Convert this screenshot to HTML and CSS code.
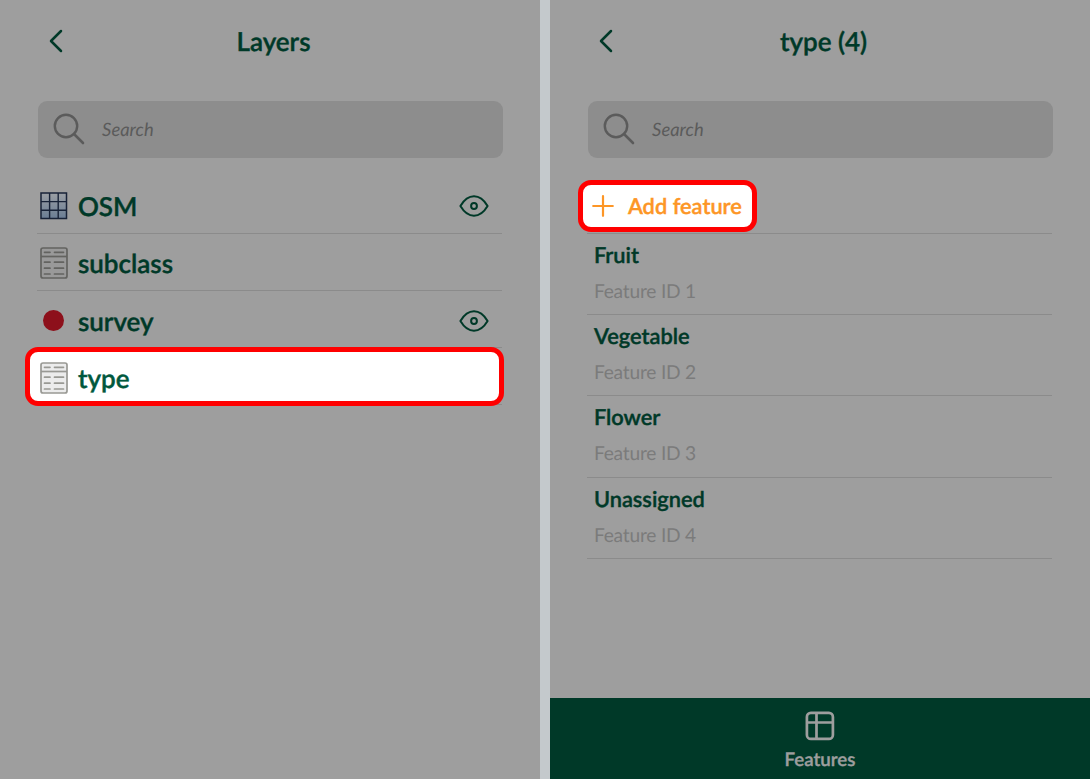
FILE: index.html
```html
<!DOCTYPE html>
<html lang="en">
<head>
<meta charset="utf-8">
<title>Layers</title>
<link rel="stylesheet" href="styles.css">
</head>
<body>
<svg class="defs" width="0" height="0">
  <defs>
    <linearGradient id="gridFill" x1="0" y1="0" x2="0" y2="1"><stop offset="0" stop-color="#9b9fa4"/><stop offset="1" stop-color="#6a7d94"/></linearGradient>
    <symbol id="back" viewBox="0 0 14 24"><path d="M12 2 2 12 12 22" fill="none" stroke="currentColor" stroke-width="2.5" stroke-linecap="round" stroke-linejoin="round"/></symbol>
    <symbol id="search" viewBox="0 0 32 32"><circle cx="13" cy="13" r="11.2" fill="none" stroke="currentColor" stroke-width="2.4"/><path d="M21 21 30 30" stroke="currentColor" stroke-width="2.6" stroke-linecap="round"/></symbol>
    <symbol id="eye" viewBox="0 0 30 22"><path d="M1.400 11C5 5 9.500 1.300 15 1.300S25 5 28.600 11C25 17 20.500 20.700 15 20.700S5 17 1.400 11Z" fill="none" stroke="currentColor" stroke-width="2" stroke-linejoin="round"/><circle cx="15" cy="11" r="2.900" fill="none" stroke="currentColor" stroke-width="2"/></symbol>
    <symbol id="table" viewBox="0 0 28 32"><rect x="1" y="1" width="26" height="30" rx="2" fill="var(--paper)" stroke="currentColor" stroke-width="1.700"/><path d="M1 9.500H27" stroke="currentColor" stroke-width="1.700"/><path d="M4.500 5.300H10M14.500 5.300H23.500M4.500 15.200H10M14.500 15.200H23.500M4.500 21.200H10M14.500 21.200H23.500M4.500 27H10M14.500 27H23.500" stroke="currentColor" stroke-width="1.700" stroke-linecap="round"/></symbol>
  </defs>
</svg>
<main class="screens">
  <section class="screen">
    <header class="header"><svg class="back"><use href="#back"/></svg><h1 class="title">Layers</h1></header>
    <div class="search"><svg class="search-icon"><use href="#search"/></svg><span class="placeholder">Search</span></div>
    <ul class="list">
      <li class="layer"><span class="symbol"><svg width="28" height="28" viewBox="0 0 28 28"><rect x="1" y="1" width="25.500" height="25.500" fill="url(#gridFill)" stroke="#182338" stroke-width="1.500"/><path d="M9.600 1V26.500M18.200 1V26.500M1 9.600H26.500M1 18.200H26.500" stroke="#182338" stroke-width="1.400"/></svg></span><span class="name">OSM</span><svg class="eye"><use href="#eye"/></svg></li>
      <li class="layer"><span class="symbol"><svg class="table-icon"><use href="#table"/></svg></span><span class="name">subclass</span></li>
      <li class="layer"><span class="symbol"><span class="dot"></span></span><span class="name">survey</span><svg class="eye"><use href="#eye"/></svg></li>
      <li class="layer selected"><span class="symbol"><svg class="table-icon"><use href="#table"/></svg></span><span class="name">type</span></li>
    </ul>
  </section>
  <section class="screen">
    <header class="header"><svg class="back"><use href="#back"/></svg><h1 class="title">type (4)</h1></header>
    <div class="search"><svg class="search-icon"><use href="#search"/></svg><span class="placeholder">Search</span></div>
    <ul class="list">
      <li class="add"><svg class="plus" viewBox="0 0 22 22"><path d="M11 1.200V20.800M1.200 11H20.800" stroke="currentColor" stroke-width="2.200" stroke-linecap="round"/></svg><span class="add-label">Add feature</span></li>
      <li class="feature"><span class="feature-name">Fruit</span><span class="feature-id">Feature ID 1</span></li>
      <li class="feature"><span class="feature-name">Vegetable</span><span class="feature-id">Feature ID 2</span></li>
      <li class="feature"><span class="feature-name">Flower</span><span class="feature-id">Feature ID 3</span></li>
      <li class="feature"><span class="feature-name">Unassigned</span><span class="feature-id">Feature ID 4</span></li>
    </ul>
    <footer class="footer"><svg class="features-icon" viewBox="0 0 30 30"><rect x="1.900" y="1.900" width="26" height="26" rx="4" fill="none" stroke="currentColor" stroke-width="2.700"/><path d="M11.500 2V28M2 11.500H28" stroke="currentColor" stroke-width="2.700"/></svg><span>Features</span></footer>
  </section>
</main>
</body>
</html>
```
FILE: styles.css
```css
*, *::before { box-sizing: border-box; }
body { margin: 0; font-family: Lato, "Liberation Sans", sans-serif; font-weight: 600; color: #003928; background: #c4c9cc; text-rendering: geometricPrecision; }
.defs { display: block; height: 0; }
.screens { display: grid; grid-template-columns: 540px 540px; gap: 10px; height: 779px; }
.screen { display: flex; flex-direction: column; background: #9e9e9e; overflow: hidden; }
.header { display: grid; grid-template-columns: 90px 1fr 83px; align-items: center; height: 101px; padding-bottom: 20px; }
.back { width: 14px; height: 24px; margin-left: 49px; }
.title { margin: 0; text-align: center; font-size: 26px; line-height: 32px; font-weight: 600; }
.title, .name, .add-label, .feature-name, .footer span { -webkit-text-stroke: 0.4px currentColor; }
.search { display: flex; align-items: center; gap: 17.5px; width: 465px; height: 57px; margin-left: 37.6px; padding-left: 15px; border-radius: 9px; background: #8d8d8d; color: #5b5b5b; font-size: 18.4px; font-style: italic; font-weight: 400; }
.placeholder { margin-top: -2px; }
.search-icon { width: 32px; height: 32px; margin-top: -1px; }
.list { width: 465px; margin: 18.5px 0 0 37.4px; padding: 0; list-style: none; }
.layer { --paper: #999; position: relative; isolation: isolate; display: flex; align-items: center; height: 57.2px; padding-top: 3.2px; border-bottom: 1px solid #8b8b8b; }
.symbol { display: flex; justify-content: center; align-items: center; width: 32.4px; margin-right: 8.1px; color: #636360; }
.symbol svg { display: block; }
.table-icon { width: 28px; height: 32px; }
.name { flex: 1; font-size: 26px; line-height: 32px; }
.eye { width: 30px; height: 22px; margin-right: 13.6px; }
.dot { width: 21px; height: 21px; border-radius: 50%; background: #8d101b; }
.selected { --paper: #ececec; color: #00583d; }
.selected .symbol { color: #999994; }
.selected::before, .add::before { content: ""; position: absolute; z-index: -1; border: 5px solid #f00; border-radius: 13px; background: #fff; }
.selected::before { left: -12.4px; top: -1px; width: 479px; height: 59px; }
.add { position: relative; isolation: isolate; display: flex; align-items: center; gap: 13.5px; height: 57.2px; padding: 3px 0 0 5px; border-bottom: 1px solid #8b8b8b; color: #fd9626; font-size: 21.8px; }
.add::before { left: -9.4px; top: 3px; width: 179px; height: 52px; }
.add-label { margin-top: -1px; }
.plus { width: 22px; height: 22px; }
.feature { display: flex; flex-direction: column; gap: 11px; height: 81.3px; padding: 7px 6.5px; border-bottom: 1px solid #8b8b8b; }
.feature-name { font-size: 21.8px; line-height: 27px; }
.feature-id { font-size: 19.2px; line-height: 26px; font-weight: 400; letter-spacing: -0.22px; color: #7b7b7b; }
.footer { display: flex; flex-direction: column; align-items: center; gap: 6px; height: 81px; margin-top: auto; padding-top: 13px; background: #003928; color: #9e9e9e; font-size: 18.7px; line-height: 25px; }
.features-icon { width: 30px; height: 30px; }
```
